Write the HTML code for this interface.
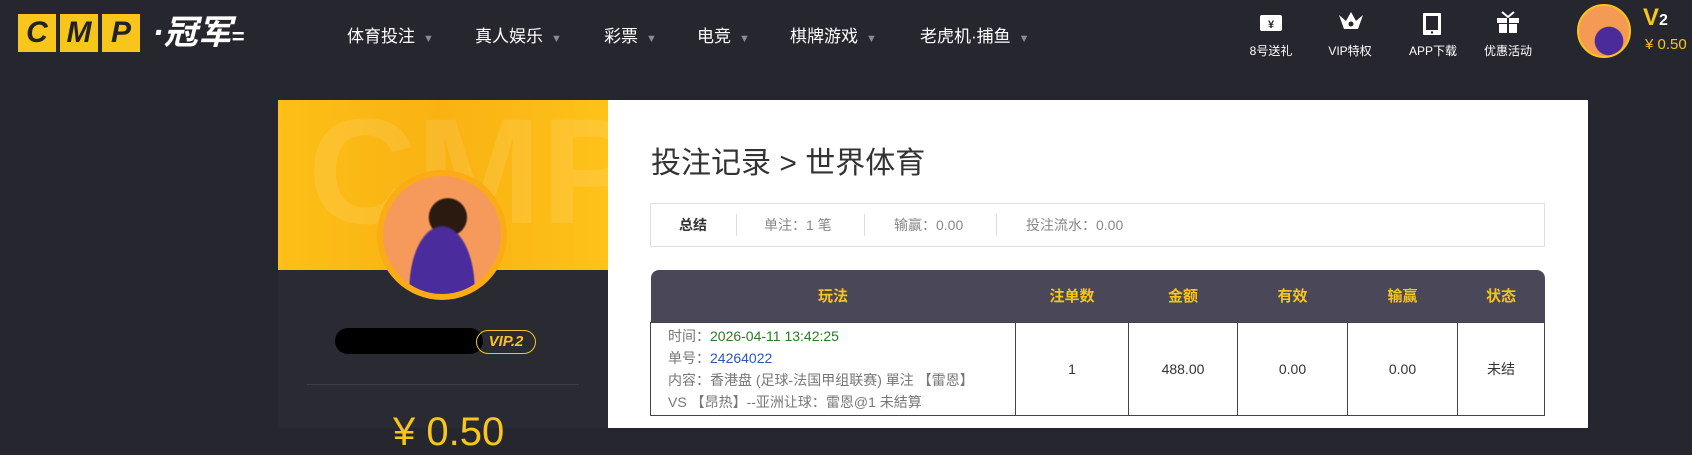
<!DOCTYPE html>
<html><head><meta charset="utf-8"><style>
*{margin:0;padding:0;box-sizing:border-box}
body{width:1692px;height:428px;overflow:hidden;background:#26262e;font-family:"Liberation Sans","Noto Sans CJK SC",sans-serif;position:relative}
.a{position:absolute;white-space:nowrap}
.nav{color:#fff;font-size:17px;top:22px}
.nav span{color:#8a8a92;font-size:11px;margin-left:8px}
.ic{color:#fff;font-size:12px;top:42px;width:90px;text-align:center}
.logo b{display:inline-block;width:38px;height:38px;background:#f7c51c;color:#222;font:italic 900 30px "Liberation Sans",sans-serif;text-align:center;line-height:38px;margin-right:4px}
th{background:#4a4858;color:#f7c51c;font-weight:bold;font-size:15px;height:52px}
td{border:1px solid #444;font-size:14px;color:#333;text-align:center}
</style></head><body>
<div class="a logo" style="left:18px;top:14px;height:40px">
<b>C</b><b>M</b><b>P</b>
<span style="color:#fff;font:bold italic 34px 'Liberation Sans','Noto Sans CJK SC',sans-serif;vertical-align:top;line-height:38px;margin-left:4px">·冠军</span><span style="color:#fff;font-weight:bold;font-size:22px;vertical-align:top;line-height:46px">=</span>
</div>
<div class="a nav" style="left:347px">体育投注<span>▼</span></div>
<div class="a nav" style="left:475px">真人娱乐<span>▼</span></div>
<div class="a nav" style="left:604px">彩票<span>▼</span></div>
<div class="a nav" style="left:697px">电竞<span>▼</span></div>
<div class="a nav" style="left:790px">棋牌游戏<span>▼</span></div>
<div class="a nav" style="left:920px">老虎机·捕鱼<span>▼</span></div>

<svg class="a" style="left:1259px;top:13px" width="24" height="20"><rect x="1" y="2" width="22" height="16" rx="2" fill="#fff"/><text x="12" y="15" font-size="11" text-anchor="middle" fill="#26262e" font-weight="bold">¥</text></svg>
<svg class="a" style="left:1337px;top:9px" width="28" height="26"><path d="M2 6L7 20H21L26 6L19 12L14 3L9 12Z" fill="#fff"/><circle cx="14" cy="15" r="2.5" fill="#26262e"/></svg>
<svg class="a" style="left:1422px;top:12px" width="20" height="24"><rect x="1" y="1" width="18" height="22" rx="1" fill="#fff"/><rect x="4" y="4" width="12" height="14" fill="#26262e"/><circle cx="10" cy="20.5" r="1.2" fill="#26262e"/></svg>
<svg class="a" style="left:1496px;top:10px" width="24" height="24"><path d="M6 2L12 7L18 2" stroke="#fff" stroke-width="2" fill="none"/><rect x="1" y="8" width="22" height="5" fill="#fff"/><rect x="3" y="14" width="18" height="9" fill="#fff"/><rect x="11" y="8" width="2" height="15" fill="#26262e"/></svg>
<div class="a ic" style="left:1226px">8号送礼</div>
<div class="a ic" style="left:1305px">VIP特权</div>
<div class="a ic" style="left:1388px">APP下载</div>
<div class="a ic" style="left:1463px">优惠活动</div>
<div class="a" style="left:1577px;top:4px;width:54px;height:54px;border-radius:50%;background:radial-gradient(circle at 60% 70%,#4b2a9a 30%,#f59a55 32%);border:2px solid #f7c51c"></div>
<div class="a" style="left:1643px;top:4px;color:#f7c51c;font:bold 24px 'Liberation Sans',sans-serif">V<span style="color:#fff;font-size:16px">2</span></div>
<div class="a" style="left:1645px;top:36px;color:#f7c51c;font-size:15px">¥ 0.50</div>

<div class="a" style="left:278px;top:100px;width:330px;height:328px;background:#2a2a33"></div>
<div class="a" style="left:278px;top:100px;width:330px;height:170px;background:linear-gradient(90deg,#fdbf18,#f9b212 50%,#fec21a);overflow:hidden"><div style="font:bold 150px 'Liberation Sans';color:rgba(255,255,255,.1);margin:-15px 0 0 30px">CMP</div></div>
<div class="a" style="left:377px;top:170px;width:130px;height:130px;border-radius:50%;background:#fbab15;padding:6px"><div style="width:118px;height:118px;border-radius:50%;background:radial-gradient(ellipse at 50% 95%,#4a2c9c 38%,transparent 40%),radial-gradient(circle at 55% 35%,#2a1a10 18%,transparent 20%),#f59a5a"></div></div>
<div class="a" style="left:335px;top:328px;width:148px;height:26px;border-radius:13px;background:#000"></div>
<div class="a" style="left:476px;top:330px;width:60px;height:24px;border:1.5px solid #f7c51c;border-radius:12px;color:#f7c51c;font:bold italic 15px 'Liberation Sans';text-align:center;line-height:21px">VIP.2</div>
<div class="a" style="left:307px;top:384px;width:272px;height:1px;background:#3e3e48"></div>
<div class="a" style="left:393px;top:410px;color:#f7c51c;font-size:40px">¥ 0.50</div>

<div class="a" style="left:608px;top:100px;width:980px;height:328px;background:#fff"></div>
<div class="a" style="left:651px;top:138px;font-size:30px;color:#333">投注记录 &gt; 世界体育</div>
<div class="a" style="left:650px;top:203px;width:895px;height:44px;border:1px solid #e0e0e0;font-size:14px;color:#888;line-height:42px">
<span class="a" style="left:28px;color:#333;font-weight:bold">总结</span>
<span class="a" style="left:85px;top:10px;height:22px;border-left:1px solid #ddd"></span>
<span class="a" style="left:113px">单注：1 笔</span>
<span class="a" style="left:213px;top:10px;height:22px;border-left:1px solid #ddd"></span>
<span class="a" style="left:243px">输赢：0.00</span>
<span class="a" style="left:345px;top:10px;height:22px;border-left:1px solid #ddd"></span>
<span class="a" style="left:375px">投注流水：0.00</span>
</div>
<table class="a" style="left:650px;top:270px;width:895px;border-collapse:collapse;overflow:hidden;border-radius:8px 8px 0 0;white-space:normal">
<tr><th style="width:365px;border-radius:8px 0 0 0">玩法</th><th style="width:113px">注单数</th><th style="width:109px">金额</th><th style="width:110px">有效</th><th style="width:110px">输赢</th><th style="border-radius:0 8px 0 0">状态</th></tr>
<tr style="height:92px"><td style="text-align:left;padding:2px 17px;line-height:22px;color:#777;font-size:14px">时间：<span style="color:#2a7a2a">2026-04-11 13:42:25</span><br>单号：<span style="color:#2e55b8">24264022</span><br>内容：香港盘 (足球-法国甲组联赛) 單注 【雷恩】<br>VS 【昂热】--亚洲让球：雷恩@1 未結算</td><td>1</td><td>488.00</td><td>0.00</td><td>0.00</td><td>未结</td></tr>
</table>
</body></html>
